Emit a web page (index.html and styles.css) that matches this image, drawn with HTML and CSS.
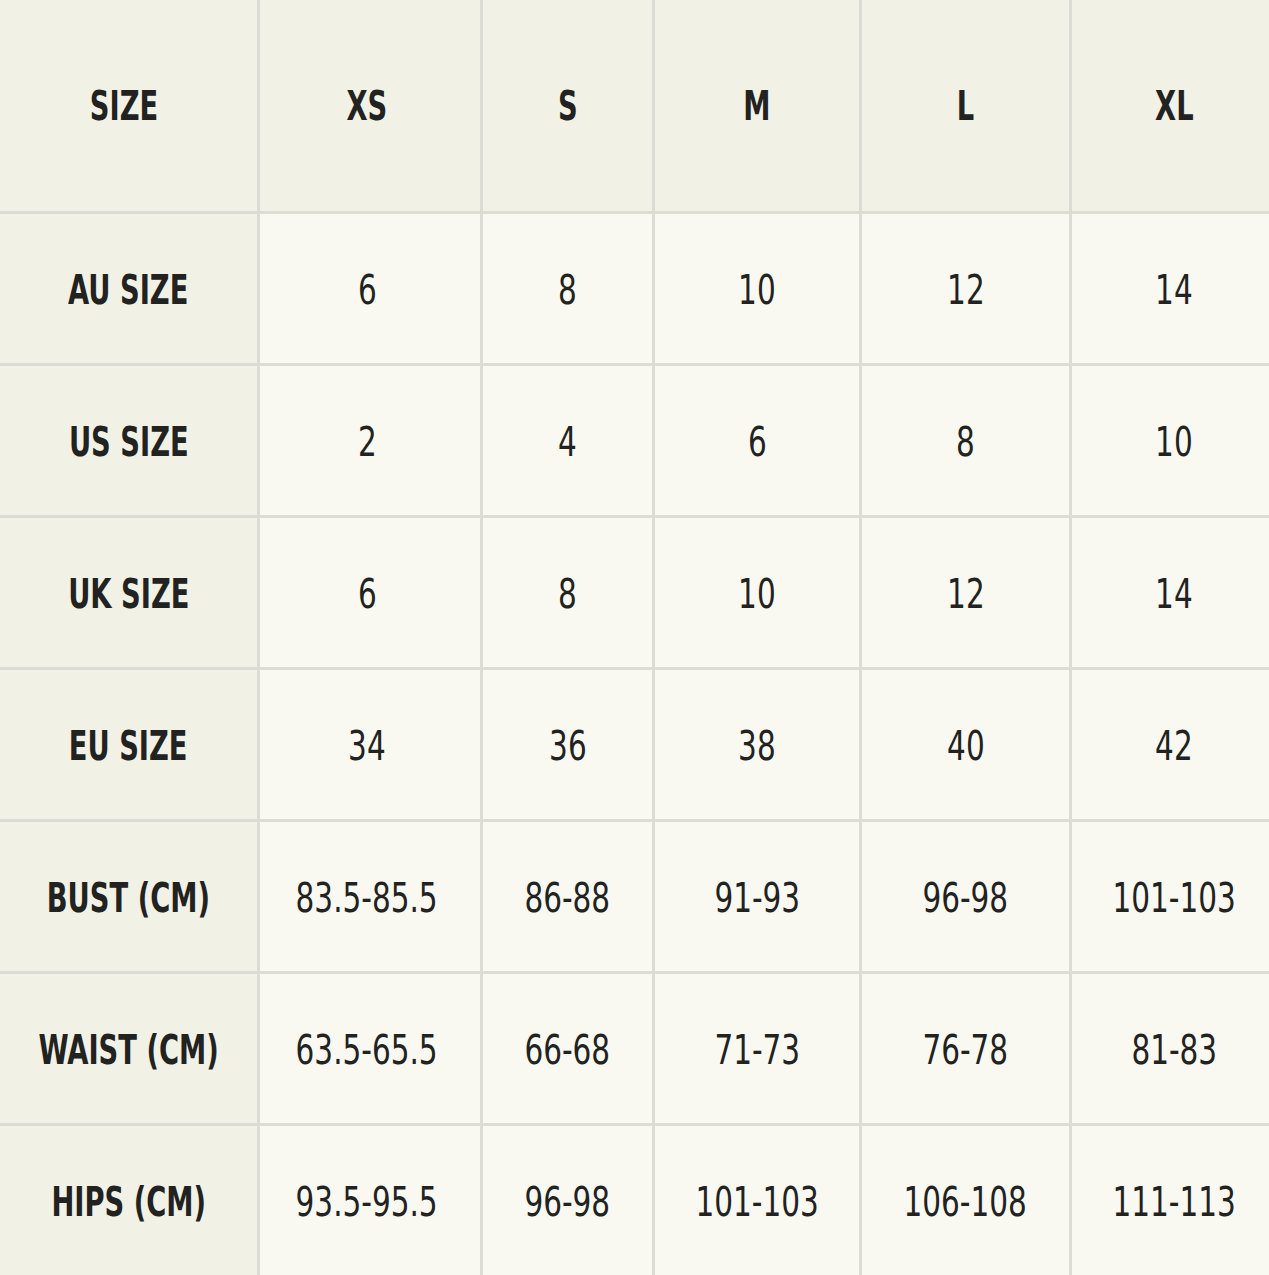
FILE: index.html
```html
<!DOCTYPE html>
<html lang="en">
<head>
<meta charset="utf-8">
<title>Size Chart</title>
<link rel="stylesheet" href="styles.css">
</head>
<body>
<div class="chart">
  <div class="cell head label"><span>SIZE</span></div>
  <div class="cell head"><span>XS</span></div>
  <div class="cell head"><span>S</span></div>
  <div class="cell head"><span>M</span></div>
  <div class="cell head"><span>L</span></div>
  <div class="cell head"><span>XL</span></div>

  <div class="cell label"><span>AU SIZE</span></div>
  <div class="cell"><span>6</span></div><div class="cell"><span>8</span></div><div class="cell"><span>10</span></div><div class="cell"><span>12</span></div><div class="cell"><span>14</span></div>

  <div class="cell label"><span>US SIZE</span></div>
  <div class="cell"><span>2</span></div><div class="cell"><span>4</span></div><div class="cell"><span>6</span></div><div class="cell"><span>8</span></div><div class="cell"><span>10</span></div>

  <div class="cell label"><span>UK SIZE</span></div>
  <div class="cell"><span>6</span></div><div class="cell"><span>8</span></div><div class="cell"><span>10</span></div><div class="cell"><span>12</span></div><div class="cell"><span>14</span></div>

  <div class="cell label"><span>EU SIZE</span></div>
  <div class="cell"><span>34</span></div><div class="cell"><span>36</span></div><div class="cell"><span>38</span></div><div class="cell"><span>40</span></div><div class="cell"><span>42</span></div>

  <div class="cell label"><span>BUST (CM)</span></div>
  <div class="cell"><span>83.5-85.5</span></div><div class="cell"><span>86-88</span></div><div class="cell"><span>91-93</span></div><div class="cell"><span>96-98</span></div><div class="cell"><span>101-103</span></div>

  <div class="cell label"><span>WAIST (CM)</span></div>
  <div class="cell"><span>63.5-65.5</span></div><div class="cell"><span>66-68</span></div><div class="cell"><span>71-73</span></div><div class="cell"><span>76-78</span></div><div class="cell"><span>81-83</span></div>

  <div class="cell label"><span>HIPS (CM)</span></div>
  <div class="cell"><span>93.5-95.5</span></div><div class="cell"><span>96-98</span></div><div class="cell"><span>101-103</span></div><div class="cell"><span>106-108</span></div><div class="cell"><span>111-113</span></div>
</div>
</body>
</html>
```
FILE: styles.css
```css
html, body {
  margin: 0;
  padding: 0;
  background: #dddcd4;
  overflow: hidden;
}

.chart {
  display: grid;
  grid-template-columns: 257px 220px 169px 204px 207px 204px;
  grid-template-rows: 211px repeat(7, 149px);
  gap: 3px;
  background: #dddcd4;
  width: 1276px;
  font-family: "DejaVu Sans Condensed", "Liberation Sans", sans-serif;
  color: #222220;
}

.cell {
  display: flex;
  align-items: center;
  justify-content: center;
  background: #f9f9f2;
  font-size: 40px;
  font-weight: 400;
  white-space: nowrap;
}

.cell:nth-child(6n + 2) {
  padding-right: 6px;
}

.cell span {
  display: inline-block;
  transform: scaleX(0.82);
  margin-top: 2px;
}

.head {
  background: #f1f1e6;
}

.label {
  background: #f1f1e6;
  font-weight: 700;
}

.head span,
.label span {
  transform: scaleX(0.76);
  font-weight: 700;
}

.head span {
  margin-top: 0;
}

.head.label span {
  margin-right: 9px;
}
```
